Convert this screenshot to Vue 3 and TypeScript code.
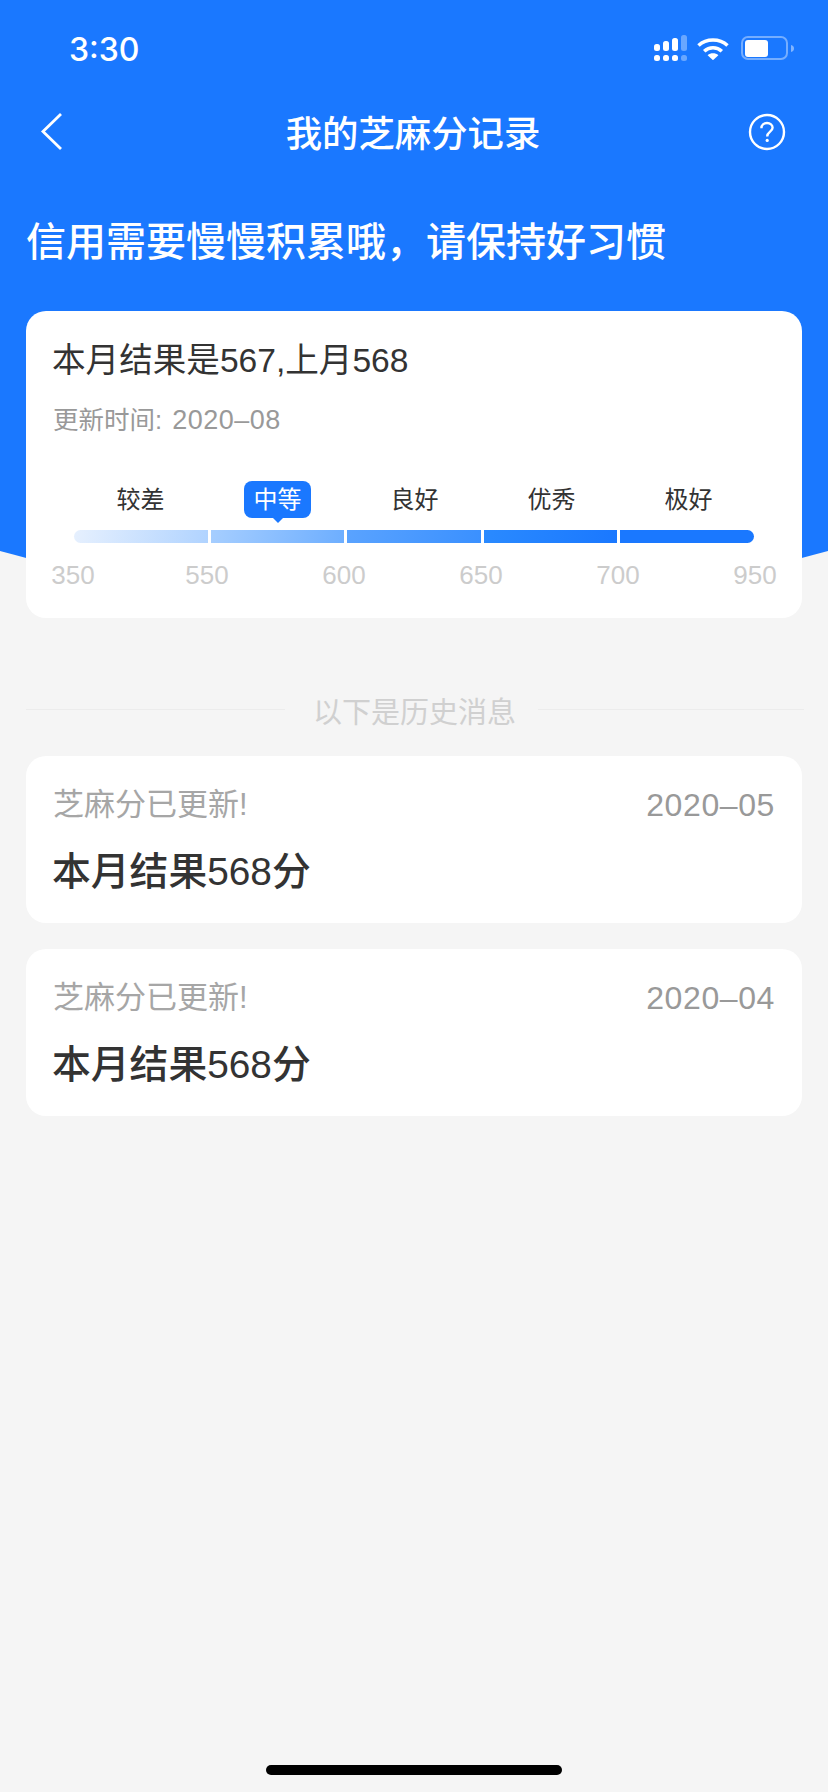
<template>
  <div class="page">
    <div class="hero-bg" />

    <!-- 状态栏 -->
    <div class="status">
      <span class="time">3:30</span>
      <div class="status-icons">
        <svg class="signal" width="33" height="26" viewBox="0 0 33 26">
          <rect x="0" y="9" width="6" height="7" rx="2.5" fill="#fff" />
          <rect x="9" y="6" width="6" height="10" rx="2.5" fill="#fff" />
          <rect x="18" y="3" width="6" height="13" rx="2.5" fill="#fff" />
          <rect x="27" y="0" width="6" height="16" rx="2.5" fill="#fff" opacity="0.35" />
          <rect x="0" y="20" width="6" height="6" rx="2.5" fill="#fff" />
          <rect x="9" y="20" width="6" height="6" rx="2.5" fill="#fff" />
          <rect x="18" y="20" width="6" height="6" rx="2.5" fill="#fff" />
          <rect x="27" y="20" width="6" height="6" rx="2.5" fill="#fff" opacity="0.35" />
        </svg>
        <svg class="wifi" width="32" height="23" viewBox="0 0 32 23">
          <path d="M1.5 8.5C9.5 1.2 22.5 1.2 30.5 8.5" fill="none" stroke="#fff" stroke-width="3.6" />
          <path d="M7.2 14.2C12.2 9.6 19.8 9.6 24.8 14.2" fill="none" stroke="#fff" stroke-width="3.6" />
          <path d="M10.6 18.2C13.6 15.6 18.4 15.6 21.4 18.2L16 23.2Z" fill="#fff" />
        </svg>
        <svg class="battery" width="53" height="24" viewBox="0 0 53 24">
          <rect x="1" y="1" width="45" height="22" rx="6" fill="none" stroke="#fff" stroke-opacity="0.4" stroke-width="2" />
          <rect x="4" y="4" width="23" height="17" rx="3" fill="#fff" />
          <path d="M50 9C52 9.6 53 10.6 53 12.5S52 15.4 50 16Z" fill="#fff" fill-opacity="0.45" />
        </svg>
      </div>
    </div>

    <!-- 导航 -->
    <div class="nav">
      <svg class="nav-back" width="24" height="40" viewBox="0 0 24 40">
        <path d="M21 2L3 19.5L21 37" fill="none" stroke="#fff" stroke-width="2.8" />
      </svg>
      <span class="nav-title">我的芝麻分记录</span>
      <svg class="nav-help" width="38" height="38" viewBox="0 0 38 38">
        <circle cx="19" cy="19" r="17" fill="none" stroke="#fff" stroke-width="2.4" />
        <path d="M13.4 15.2C13.4 12 16 10 19 10C22.2 10 24.6 12 24.6 14.8C24.6 18.6 19.2 18.8 19.2 23.4" fill="none" stroke="#fff" stroke-width="2.4" />
        <circle cx="19.2" cy="27.4" r="1.6" fill="#fff" />
      </svg>
    </div>

    <h1 class="slogan">信用需要慢慢积累哦，请保持好习惯</h1>

    <!-- 本月结果 -->
    <section class="card current">
      <div class="current-title">本月结果是567,上月568</div>
      <div class="current-meta">更新时间: <span class="meta-date">2020–08</span></div>

      <div class="levels">
        <span v-for="l in levels" :key="l" class="level" :class="{ active: l === active }">{{ l }}</span>
      </div>
      <div class="bar">
        <i v-for="n in 5" :key="n" :class="`seg seg-${n}`" />
      </div>
      <div class="ticks">
        <span v-for="t in ticks" :key="t">{{ t }}</span>
      </div>
    </section>

    <div class="divider">
      <i class="line-left" />
      <span>以下是历史消息</span>
      <i class="line-right" />
    </div>

    <section v-for="h in history" :key="h.date" class="card record">
      <div class="record-head">
        <span class="record-label">芝麻分已更新!</span>
        <span class="record-date">{{ h.date }}</span>
      </div>
      <div class="record-result">本月结果{{ h.score }}分</div>
    </section>

    <div class="home-indicator" />
  </div>
</template>

<script setup lang="ts">
const levels = ['较差', '中等', '良好', '优秀', '极好']
const active = '中等'
const ticks = [350, 550, 600, 650, 700, 950]
const history = [
  { date: '2020–05', score: 568 },
  { date: '2020–04', score: 568 },
]
</script>

<style scoped>
.page {
  position: relative;
  width: 828px;
  height: 1792px;
  overflow: hidden;
  background: #f5f5f5;
  font-family: "Liberation Sans", "Noto Sans CJK SC", sans-serif;
  color: #333;
}

/* 顶部蓝色弧形背景 */
.hero-bg {
  position: absolute;
  left: 0;
  top: 0;
  width: 828px;
  height: 606px;
  background: #1a78ff;
  clip-path: circle(1588px at 414px -982px);
}

.status {
  position: relative;
  display: flex;
  align-items: center;
  justify-content: space-between;
  height: 48px;
  margin: 24px 0;
  padding: 0 34px 0 69px;
}
.time {
  margin-top: 2px;
  font-family: Inter, sans-serif;
  font-size: 32px;
  font-weight: 500;
  color: #fff;
}
.status-icons {
  display: flex;
  align-items: center;
}
.signal { margin-right: 10px; }
.wifi { margin-right: 12px; margin-top: 1px; }

.nav {
  position: relative;
  display: grid;
  grid-template-columns: 1fr auto 1fr;
  align-items: center;
  height: 72px;
  padding: 0 42px 0 40px;
  color: #fff;
}
.nav-help { justify-self: end; }
.nav-title {
  margin-top: -2px;
  font-size: 36.4px;
  font-weight: 500;
}

.slogan {
  position: relative;
  margin: 50px 0 0;
  padding-left: 26px;
  font-size: 40px;
  line-height: 48px;
  font-weight: 500;
  color: #fff;
}

.card {
  position: relative;
  margin: 0 26px;
  background: #fff;
  border-radius: 20px;
}

.current {
  margin-top: 45px;
  height: 307px;
  padding: 26px 26px 0 26px;
  box-sizing: border-box;
}
.current-title {
  font-size: 33.6px;
  line-height: 48px;
}
.current-meta {
  margin-top: 17px;
  padding-left: 1px;
  font-size: 25.5px;
  line-height: 36px;
  color: #999;
}
.meta-date {
  margin-left: 3px;
  font-size: 27px;
  letter-spacing: 0.5px;
}

.levels {
  display: grid;
  grid-template-columns: repeat(5, 137px);
  margin: 43px 0 0 20px;
  height: 37px;
}
.level {
  justify-self: center;
  font-size: 24px;
  line-height: 37px;
}
.level.active {
  position: relative;
  padding: 0 9.5px;
  border-radius: 8px;
  background: #1a78ff;
  color: #fff;
}
.level.active::after {
  content: '';
  position: absolute;
  left: 50%;
  top: 100%;
  margin-left: -5px;
  border: 5px solid transparent;
  border-bottom: 0;
  border-top-color: #1a78ff;
}

.bar {
  display: flex;
  gap: 3px;
  margin: 12px 0 0 22px;
  width: 680px;
  height: 13px;
}
.seg { flex: 1; }
.seg-1 {
  border-radius: 7px 0 0 7px;
  background: linear-gradient(100deg, #e6f0fe, #b0d3ff);
}
.seg-2 { background: linear-gradient(100deg, #a6ceff, #6daeff); }
.seg-3 { background: linear-gradient(100deg, #5aa3ff, #3a90ff); }
.seg-4 { background: linear-gradient(100deg, #2a8aff, #1a78ff); }
.seg-5 {
  border-radius: 0 7px 7px 0;
  background: #1a78ff;
}

.ticks {
  display: grid;
  grid-template-columns: 134px repeat(4, 137px) 44px;
  margin: 17px 0 0 -1px;
  font-size: 26px;
  line-height: 30px;
  color: #ccc;
}
.ticks span {
  width: 44px;
  text-align: center;
}

.divider {
  display: flex;
  align-items: center;
  height: 40px;
  margin-top: 72px;
  padding: 0 24px 0 26px;
  font-size: 29px;
  color: #d0d0d0;
}
.divider i {
  height: 1px;
  margin-top: -2px;
  background: #ececec;
}
.line-left {
  width: 259px;
  margin-right: 28px;
}
.line-right {
  flex: 1;
  margin-left: 22px;
}

.record {
  margin-top: 26px;
  height: 167px;
  padding: 29px 27px 0 26px;
  box-sizing: border-box;
}
.record-head {
  display: flex;
  justify-content: space-between;
  line-height: 40px;
}
.record-label {
  padding-left: 1px;
  font-size: 31px;
  color: #a6a6a6;
}
.record-date {
  font-size: 32px;
  letter-spacing: 0.6px;
  color: #999;
}
.record-result {
  margin-top: 22px;
  font-size: 38.8px;
  line-height: 50px;
  font-weight: 500;
}

.home-indicator {
  position: absolute;
  left: 266px;
  bottom: 17px;
  width: 296px;
  height: 10px;
  border-radius: 5px;
  background: #000;
}
</style>

<style>
body { background: #f5f5f5; }
</style>
